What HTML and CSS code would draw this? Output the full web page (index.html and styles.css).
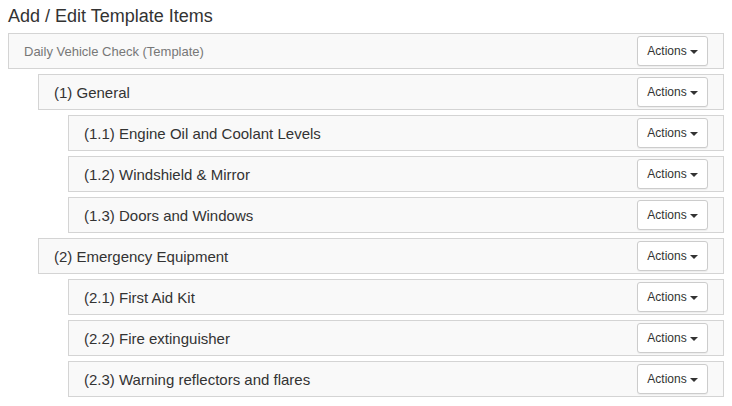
FILE: index.html
```html
<html lang="en">
<head>
    <meta charset="UTF-8">
    <meta name="viewport" content="width=device-width, initial-scale=1.0">
    <title>Add / Edit Template Items</title>

    <link rel="stylesheet" href="styles.css">
</head>
<body>
    <h3 class="title">Add / Edit Template Items</h3>

    <div class="tree">
        <div class="tree__item tree__item--root">
            <span class="tree__name">Daily Vehicle Check (Template)</span>
            <button class="btn">Actions <span class="caret"></span></button>
        </div>

        <div class="tree__item tree__item--l1">
            <span class="tree__name">(1) General</span>
            <button class="btn">Actions <span class="caret"></span></button>
        </div>
        <div class="tree__item tree__item--l2">
            <span class="tree__name">(1.1) Engine Oil and Coolant Levels</span>
            <button class="btn">Actions <span class="caret"></span></button>
        </div>
        <div class="tree__item tree__item--l2">
            <span class="tree__name">(1.2) Windshield &amp; Mirror</span>
            <button class="btn">Actions <span class="caret"></span></button>
        </div>
        <div class="tree__item tree__item--l2">
            <span class="tree__name">(1.3) Doors and Windows</span>
            <button class="btn">Actions <span class="caret"></span></button>
        </div>

        <div class="tree__item tree__item--l1">
            <span class="tree__name">(2) Emergency Equipment</span>
            <button class="btn">Actions <span class="caret"></span></button>
        </div>
        <div class="tree__item tree__item--l2">
            <span class="tree__name">(2.1) First Aid Kit</span>
            <button class="btn">Actions <span class="caret"></span></button>
        </div>
        <div class="tree__item tree__item--l2">
            <span class="tree__name">(2.2) Fire extinguisher</span>
            <button class="btn">Actions <span class="caret"></span></button>
        </div>
        <div class="tree__item tree__item--l2">
            <span class="tree__name">(2.3) Warning reflectors and flares</span>
            <button class="btn">Actions <span class="caret"></span></button>
        </div>
    </div>
</body>
</html>
```

FILE: styles.css
```css
html, body {
    margin: 0;
    background-color: #fff;
    color: #333;
    font-family: "Liberation Sans", Arial, Helvetica, sans-serif;
}

body {
    padding: 6px 8px;
}

.title {
    margin: 0 0 7px 0;
    font-size: 18px;
    font-weight: normal;
    line-height: 20px;
}

.tree__item {
    display: flex;
    justify-content: space-between;
    align-items: center;
    height: 36px;
    box-sizing: border-box;
    padding: 2px 15px;
    margin-bottom: 5px;
    background-color: #f9f9f9;
    border: 1px solid #d4d4d4;
    font-size: 15px;
}

.tree__item--root {
    font-size: 13px;
    color: #777;
}

.tree__item--l1 {
    margin-left: 30px;
}

.tree__item--l2 {
    margin-left: 60px;
}

.btn {
    height: 30px;
    padding: 5px 9px;
    font-family: inherit;
    font-size: 12px;
    line-height: 18px;
    color: #333;
    background-color: #fff;
    border: 1px solid #ccc;
    border-radius: 3px;
    box-sizing: border-box;
    box-shadow: 0 1px 1px rgba(0, 0, 0, 0.05);
}

.caret {
    display: inline-block;
    width: 0;
    height: 0;
    vertical-align: middle;
    border-top: 4px solid #333;
    border-left: 4px solid transparent;
    border-right: 4px solid transparent;
}
```
